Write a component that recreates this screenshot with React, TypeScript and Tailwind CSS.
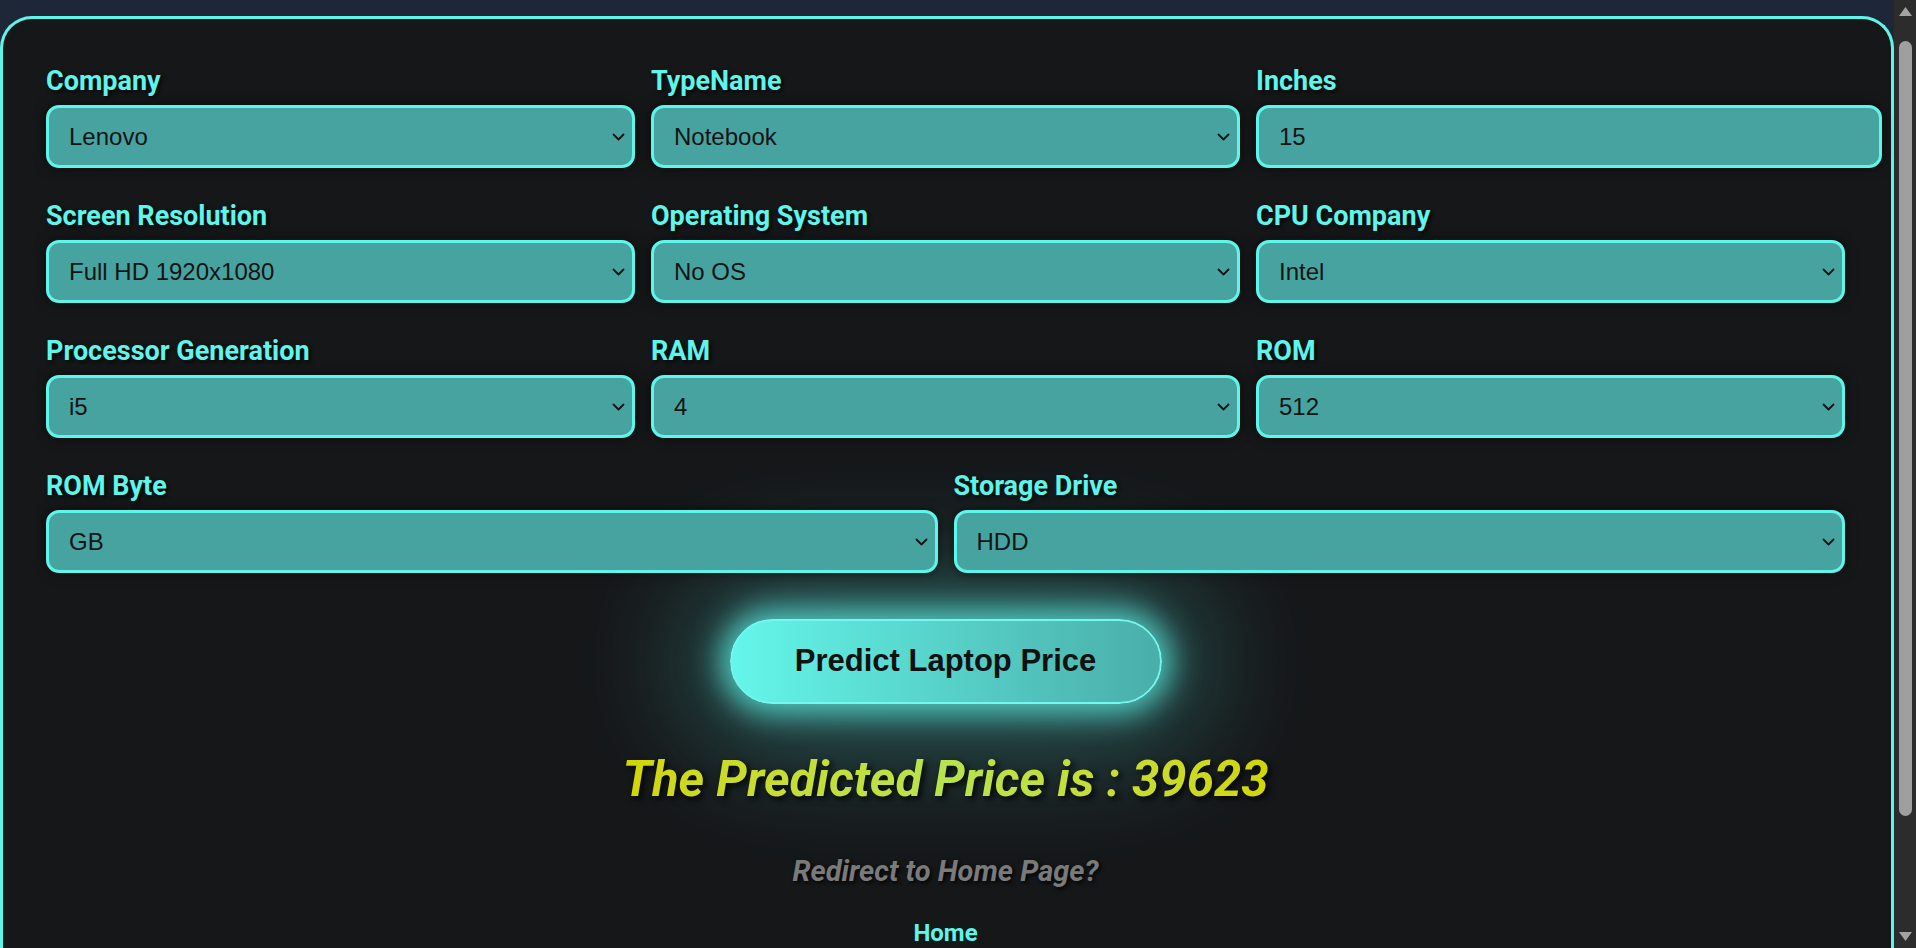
import React from "react";

const fieldsTop = [
  { label: "Company", value: "Lenovo", options: ["Lenovo", "Dell", "HP", "Asus", "Acer", "Apple"] },
  { label: "TypeName", value: "Notebook", options: ["Notebook", "Ultrabook", "Gaming", "2 in 1 Convertible"] },
];

const fieldsMid = [
  { label: "Screen Resolution", value: "Full HD 1920x1080", options: ["Full HD 1920x1080", "1366x768", "4K Ultra HD 3840x2160"] },
  { label: "Operating System", value: "No OS", options: ["No OS", "Windows 10", "Linux", "macOS"] },
  { label: "CPU Company", value: "Intel", options: ["Intel", "AMD", "Samsung"] },
  { label: "Processor Generation", value: "i5", options: ["i3", "i5", "i7"] },
  { label: "RAM", value: "4", options: ["4", "8", "16", "32"] },
  { label: "ROM", value: "512", options: ["128", "256", "512", "1024"] },
];

const fieldsLast = [
  { label: "ROM Byte", value: "GB", options: ["GB", "TB"] },
  { label: "Storage Drive", value: "HDD", options: ["HDD", "SSD", "Flash Storage", "Hybrid"] },
];

const labelCls =
  "block text-[27px] leading-[36px] mb-[6px] font-bold text-[#5ef5ea] [font-family:Roboto,'Noto_Sans',sans-serif] [text-shadow:2px_2px_4px_rgba(0,0,0,0.85)]";

const boxCls =
  "w-full h-[63px] appearance-none rounded-[13px] border-[3px] border-[#5ef5ea] bg-[#47a3a0] pl-[20px] pr-10 text-[24px] text-[#141414] [font-family:'Liberation_Sans',Arial,sans-serif] outline-none shadow-[0_0_12px_rgba(0,0,0,0.55)]";

function Chevron() {
  return (
    <svg
      className="pointer-events-none absolute right-[10px] top-1/2 -translate-y-1/2"
      width="13"
      height="8"
      viewBox="0 0 13 8"
      fill="none"
    >
      <path d="M1.5 1.5 L6.5 6.5 L11.5 1.5" stroke="#141414" strokeWidth="1.8" strokeLinecap="round" strokeLinejoin="round" />
    </svg>
  );
}

function SelectField({ label, value, options }: { label: string; value: string; options: string[] }) {
  return (
    <div>
      <label className={labelCls}>{label}</label>
      <div className="relative">
        <select className={boxCls} defaultValue={value}>
          {options.map((o) => (
            <option key={o} value={o}>
              {o}
            </option>
          ))}
        </select>
        <Chevron />
      </div>
    </div>
  );
}

// window scrollbar as it shows in the screenshot
function ScrollStrip() {
  return (
    <div className="flex h-screen w-[22px] shrink-0 flex-col items-center bg-[#2c2c2c]">
      <svg className="mt-[6px]" width="15" height="11" viewBox="0 0 15 11">
        <path d="M7.5 1 L14 10 L1 10 Z" fill="#a3a3a3" />
      </svg>
      <div className="mt-[24px] h-[775px] w-[13px] rounded-full bg-[#9f9f9f]" />
      <div className="flex-1" />
      <svg className="mb-[6px]" width="15" height="11" viewBox="0 0 15 11">
        <path d="M1 1 L14 1 L7.5 10 Z" fill="#a3a3a3" />
      </svg>
    </div>
  );
}

export default function App() {
  return (
    <div className="flex h-screen overflow-hidden bg-[#1e2737]">
      <div className="min-w-0 flex-1 pt-4">
        <div className="rounded-t-[32px] border-[3px] border-b-0 border-[#5ef5ea] bg-[#161719] pl-[43px] pr-[46px] pt-[44px] pb-24">
          <div className="grid grid-cols-3 gap-x-4 gap-y-[30px]">
            {fieldsTop.map((f) => (
              <SelectField key={f.label} {...f} />
            ))}
            <div>
              <label className={labelCls}>Inches</label>
              <input className={boxCls + " !w-[626px]"} defaultValue="15" />
            </div>
            {fieldsMid.map((f) => (
              <SelectField key={f.label} {...f} />
            ))}
          </div>
          <div className="mt-[30px] grid grid-cols-2 gap-x-4">
            {fieldsLast.map((f) => (
              <SelectField key={f.label} {...f} />
            ))}
          </div>

          <div className="mt-[46px] flex flex-col items-center">
            <button className="h-[85px] w-[432px] rounded-full border-2 border-[#74f7ee] bg-gradient-to-r from-[#64f6ea] to-[#4aaea9] text-[31px] font-bold text-[#111] [font-family:'Liberation_Sans',Arial,sans-serif] shadow-[0_0_30px_10px_rgba(94,245,234,0.75),0_0_120px_45px_rgba(94,245,234,0.3)]">
              Predict Laptop Price
            </button>
            <h2 className="mt-[51px] text-[49px] leading-none font-bold italic [font-family:Roboto,sans-serif] bg-gradient-to-r from-[#d2d600] via-[#b8e34c] to-[#d2d600] bg-clip-text text-transparent [filter:drop-shadow(3px_3px_3px_rgba(0,0,0,0.85))]">
              The Predicted Price is : 39623
            </h2>
            <p className="mt-[46px] text-[29px] font-bold italic text-[#7a7a7a] [font-family:Roboto,sans-serif] [text-shadow:2px_2px_4px_rgba(0,0,0,0.9)]">
              Redirect to Home Page?
            </p>
            <a href="#" className="mt-[21px] text-[24px] font-bold text-[#5ef5ea] [font-family:Roboto,sans-serif]">
              Home
            </a>
          </div>
        </div>
      </div>
      <ScrollStrip />
    </div>
  );
}
